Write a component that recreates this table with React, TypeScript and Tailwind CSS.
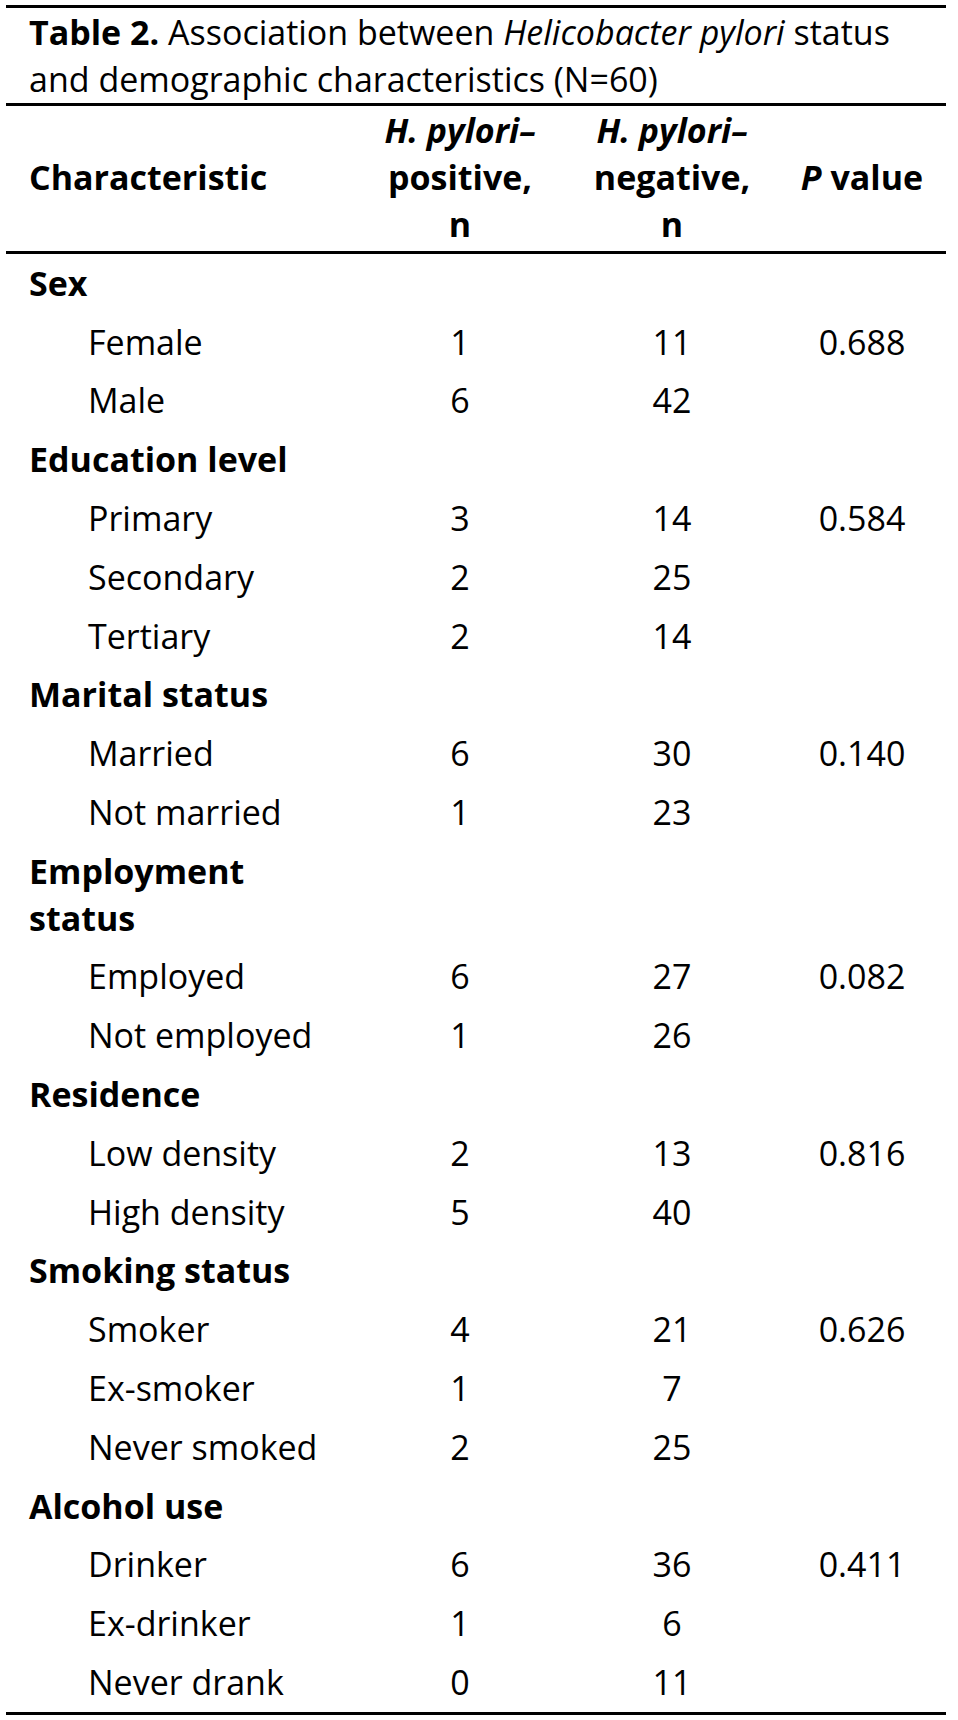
import React from 'react';

type Row = { label: string; pos: string; neg: string; p?: string };
type Group = { title: string; rows: Row[] };

const groups: Group[] = [
  {
    title: 'Sex',
    rows: [
      { label: 'Female', pos: '1', neg: '11', p: '0.688' },
      { label: 'Male', pos: '6', neg: '42' },
    ],
  },
  {
    title: 'Education level',
    rows: [
      { label: 'Primary', pos: '3', neg: '14', p: '0.584' },
      { label: 'Secondary', pos: '2', neg: '25' },
      { label: 'Tertiary', pos: '2', neg: '14' },
    ],
  },
  {
    title: 'Marital status',
    rows: [
      { label: 'Married', pos: '6', neg: '30', p: '0.140' },
      { label: 'Not married', pos: '1', neg: '23' },
    ],
  },
  {
    title: 'Employment status',
    rows: [
      { label: 'Employed', pos: '6', neg: '27', p: '0.082' },
      { label: 'Not employed', pos: '1', neg: '26' },
    ],
  },
  {
    title: 'Residence',
    rows: [
      { label: 'Low density', pos: '2', neg: '13', p: '0.816' },
      { label: 'High density', pos: '5', neg: '40' },
    ],
  },
  {
    title: 'Smoking status',
    rows: [
      { label: 'Smoker', pos: '4', neg: '21', p: '0.626' },
      { label: 'Ex-smoker', pos: '1', neg: '7' },
      { label: 'Never smoked', pos: '2', neg: '25' },
    ],
  },
  {
    title: 'Alcohol use',
    rows: [
      { label: 'Drinker', pos: '6', neg: '36', p: '0.411' },
      { label: 'Ex-drinker', pos: '1', neg: '6' },
      { label: 'Never drank', pos: '0', neg: '11' },
    ],
  },
];

const cols = 'grid grid-cols-[368px_172px_252px_128px]';

export default function App() {
  return (
    <div className="min-h-[1720px] bg-white pt-[5px] pl-[6px] font-['Open_Sans',sans-serif] text-[34px] leading-[47px] text-black">
      <div className="w-[940px] border-t-[3px] border-b-[3px] border-black">
        {/* Caption */}
        <div className="pl-[23px] pt-[1px] border-b-[3px] border-black">
          <span className="font-bold">Table 2.</span> Association between <i>Helicobacter pylori</i> status
          <br />
          and demographic characteristics (N=60)
        </div>

        {/* Column headers */}
        <div className={`${cols} items-center pt-[1px] pb-[3px] font-bold border-b-[3px] border-black`}>
          <div className="pl-[23px]">Characteristic</div>
          <div className="text-center">
            <i>H. pylori–</i>
            <br />
            positive,
            <br />
            n
          </div>
          <div className="text-center">
            <i>H. pylori–</i>
            <br />
            negative,
            <br />
            n
          </div>
          <div className="text-center">
            <i>P</i> value
          </div>
        </div>

        {/* Body */}
        {groups.map((g) => (
          <div key={g.title}>
            <div className={`${cols} py-[5.9px]`}>
              <div className="pl-[23px] pr-[40px] font-bold">{g.title}</div>
            </div>
            {g.rows.map((r) => (
              <div key={r.label} className={`${cols} py-[5.9px]`}>
                <div className="pl-[82px]">{r.label}</div>
                <div className="text-center">{r.pos}</div>
                <div className="text-center">{r.neg}</div>
                <div className="text-center">{r.p}</div>
              </div>
            ))}
          </div>
        ))}
      </div>
    </div>
  );
}
